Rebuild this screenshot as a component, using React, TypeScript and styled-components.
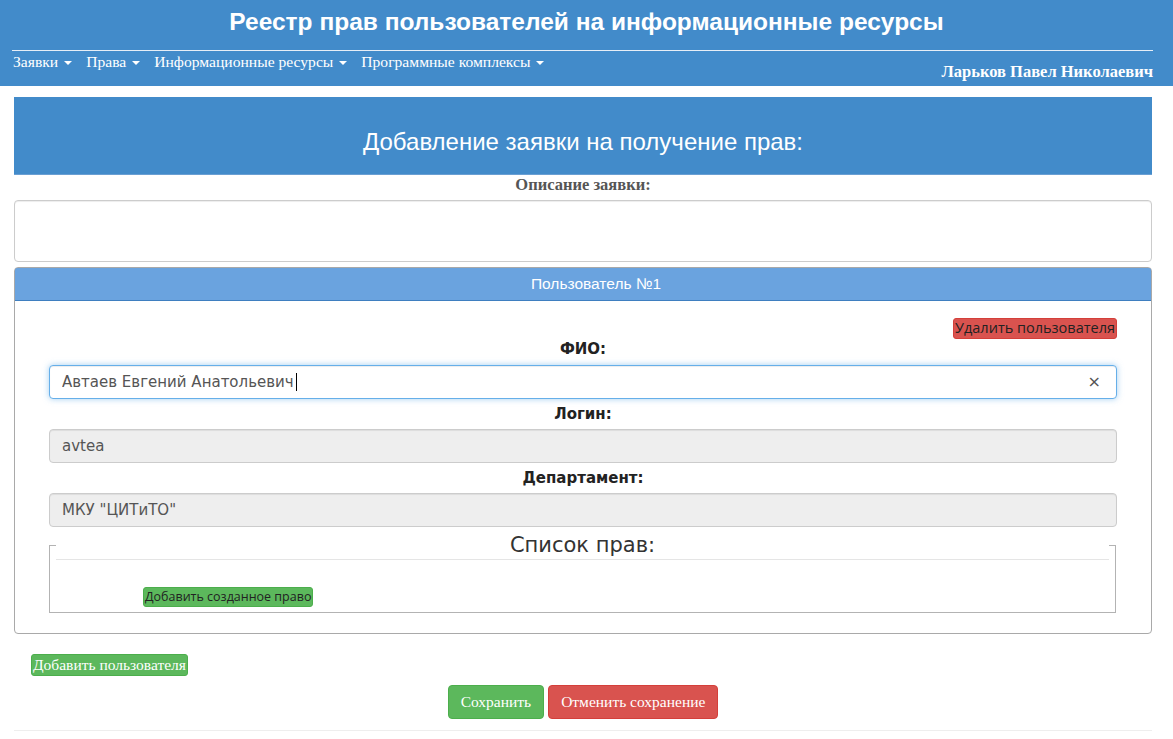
import React from "react";
import styled, { createGlobalStyle } from "styled-components";

const Global = createGlobalStyle`
  html, body { margin: 0; padding: 0; background: #fff; }
  body { font-family: "Liberation Serif", serif; color: #333; }
  * { box-sizing: border-box; }
`;

const Header = styled.header`
  background: #428bca;
  height: 86px;
  display: flex;
  flex-direction: column;
`;

const Title = styled.h1`
  margin: 8px 0 0;
  font-family: "Liberation Sans", Arial, sans-serif;
  font-weight: bold;
  font-size: 24.5px;
  line-height: 28px;
  color: #fff;
  text-align: center;
`;

const HeaderRule = styled.div`
  height: 1px;
  background: #e6eef7;
  margin: 14px 20px 0 12px;
`;

const NavRow = styled.nav`
  flex: 1;
  display: flex;
  justify-content: space-between;
  padding: 0 20px 0 13px;
`;

const NavList = styled.ul`
  list-style: none;
  margin: 0;
  padding: 0;
  display: flex;
  gap: 14px;
  align-self: flex-start;
`;

const NavItem = styled.li`
  font-family: "Liberation Serif", serif;
  font-size: 15.6px;
  line-height: 22px;
  color: #fff;
  display: flex;
  align-items: center;
`;

const Caret = styled.span`
  display: inline-block;
  width: 0;
  height: 0;
  margin-left: 6px;
  border-left: 4px solid transparent;
  border-right: 4px solid transparent;
  border-top: 4px solid #fff;
  margin-top: 2px;
`;

const UserName = styled.div`
  align-self: flex-end;
  margin-bottom: 4px;
  font-family: "Liberation Serif", serif;
  font-weight: bold;
  font-size: 16.5px;
  line-height: 20px;
  color: #fff;
`;

const Main = styled.main`
  padding: 11px 21px 0 14px;
  display: flex;
  flex-direction: column;
`;

const Banner = styled.div`
  height: 78px;
  background: #428bca;
  border-bottom: 1px solid #6a9fd3;
  padding-top: 31px;
  text-align: center;
  font-family: "Liberation Sans", Arial, sans-serif;
  font-size: 24px;
  line-height: 28px;
  color: #fff;
`;

const DescLabel = styled.div`
  height: 20px;
  line-height: 20px;
  text-align: center;
  font-family: "Liberation Serif", serif;
  font-weight: bold;
  font-size: 16.5px;
  color: #555;
  margin-bottom: 5px;
`;

const TextArea = styled.textarea`
  display: block;
  width: 100%;
  height: 62px;
  border: 1px solid #ccc;
  border-radius: 4px;
  resize: none;
  margin: 0;
  box-shadow: inset 0 1px 1px rgba(0, 0, 0, 0.075);
`;

const Panel = styled.section`
  margin-top: 5px;
  border: 1px solid #a9a9a9;
  border-radius: 4px;
  overflow: hidden;
`;

const PanelHeading = styled.div`
  height: 34px;
  background: #6aa3df;
  margin: -1px -1px 0;
  border: 1px solid #3f7fc0;
  border-radius: 4px 4px 0 0;
  padding-left: 26px;
  text-align: center;
  font-family: "Liberation Sans", Arial, sans-serif;
  font-size: 15.5px;
  line-height: 31px;
  color: #fff;
`;

const PanelBody = styled.div`
  padding: 17px 34px 20px 34px;
  display: flex;
  flex-direction: column;
`;

const ActionRow = styled.div`
  display: flex;
  justify-content: flex-end;
`;

const SmallButton = styled.button<{ $variant: "danger" | "success"; $size: number }>`
  font-family: "Open Sans", sans-serif;
  font-size: ${(p) => p.$size}px;
  color: #222;
  background: ${(p) => (p.$variant === "danger" ? "#d9534f" : "#5cb85c")};
  border: 1px solid ${(p) => (p.$variant === "danger" ? "#d43f3a" : "#4cae4c")};
  border-radius: 3px;
  padding: 0 1px;
  height: ${(p) => (p.$size > 13 ? 21 : 20)}px;
  line-height: 1;
  cursor: pointer;
  white-space: nowrap;
`;

const FieldLabel = styled.div<{ $first?: boolean }>`
  text-align: center;
  font-family: "DejaVu Sans", Verdana, sans-serif;
  font-weight: bold;
  font-size: 15px;
  color: #222;
  height: ${(p) => (p.$first ? 26 : 30)}px;
  line-height: ${(p) => (p.$first ? 20 : 30)}px;
`;

const InputWrap = styled.div`
  position: relative;
`;

const Input = styled.input<{ $focused?: boolean }>`
  display: block;
  width: 100%;
  height: 34px;
  margin: 0;
  padding: 0 12px;
  font-family: "DejaVu Sans", Verdana, sans-serif;
  font-size: 15px;
  color: #555;
  border: 1px solid ${(p) => (p.$focused ? "#66afe9" : "#ccc")};
  border-radius: 4px;
  background: ${(p) => (p.$focused ? "#fff" : "#eee")};
  outline: none;
  box-shadow: ${(p) =>
    p.$focused
      ? "inset 0 1px 1px rgba(0,0,0,.075), 0 0 6px rgba(102,175,233,.6)"
      : "inset 0 1px 1px rgba(0,0,0,.075)"};
`;

const ClearIcon = styled.span`
  position: absolute;
  right: 16px;
  top: 50%;
  transform: translateY(-50%);
  font-family: "DejaVu Sans", sans-serif;
  font-size: 16px;
  color: #555;
  line-height: 1;
`;

const TextCaret = styled.span`
  position: absolute;
  left: 247px;
  top: 8px;
  width: 1px;
  height: 18px;
  background: #000;
`;

const Fieldset = styled.fieldset`
  margin: 4px 1px 0 0;
  padding: 0 6px;
  border: 1px solid #b3b3b3;
  min-inline-size: 0;
`;

const Legend = styled.legend`
  width: 100%;
  padding: 0;
  text-align: center;
  font-family: "DejaVu Sans", Verdana, sans-serif;
  font-size: 21px;
  line-height: 28px;
  color: #333;
  border-bottom: 1px solid #e5e5e5;
`;

const RightsArea = styled.div`
  padding: 27px 0 5px 87px;
  display: flex;
`;

const FormButton = styled.button<{ $variant: "danger" | "success"; $tall?: boolean }>`
  font-family: "Liberation Serif", serif;
  font-size: 15.5px;
  color: #fff;
  background: ${(p) => (p.$variant === "danger" ? "#d9534f" : "#5cb85c")};
  border: 1px solid ${(p) => (p.$variant === "danger" ? "#d43f3a" : "#4cae4c")};
  border-radius: ${(p) => (p.$tall ? 4 : 3)}px;
  height: ${(p) => (p.$tall ? 34 : 22)}px;
  padding: ${(p) => (p.$tall ? "0 12px" : "0 1px")};
  cursor: pointer;
  white-space: nowrap;
`;

const AddUserRow = styled.div`
  margin: 20px 0 0 17px;
  display: flex;
`;

const SaveRow = styled.div`
  margin-top: 9px;
  display: flex;
  justify-content: center;
  gap: 4px;
`;

const BottomRule = styled.hr`
  margin: 11px 0 0;
  border: 0;
  border-top: 1px solid #eee;
`;

export default function App() {
  const menu = ["Заявки", "Права", "Информационные ресурсы", "Программные комплексы"];
  return (
    <>
      <Global />
      <Header>
        <Title>Реестр прав пользователей на информационные ресурсы</Title>
        <HeaderRule />
        <NavRow>
          <NavList>
            {menu.map((m) => (
              <NavItem key={m}>
                {m}
                <Caret />
              </NavItem>
            ))}
          </NavList>
          <UserName>Ларьков Павел Николаевич</UserName>
        </NavRow>
      </Header>
      <Main>
        <Banner>Добавление заявки на получение прав:</Banner>
        <DescLabel>Описание заявки:</DescLabel>
        <TextArea />
        <Panel>
          <PanelHeading>Пользователь №1</PanelHeading>
          <PanelBody>
            <ActionRow>
              <SmallButton $variant="danger" $size={14.5}>Удалить пользователя</SmallButton>
            </ActionRow>
            <FieldLabel $first>ФИО:</FieldLabel>
            <InputWrap>
              <Input $focused defaultValue="Автаев Евгений Анатольевич" />
              <TextCaret />
              <ClearIcon>×</ClearIcon>
            </InputWrap>
            <FieldLabel>Логин:</FieldLabel>
            <Input disabled defaultValue="avtea" />
            <FieldLabel>Департамент:</FieldLabel>
            <Input disabled defaultValue='МКУ "ЦИТиТО"' />
            <Fieldset>
              <Legend>Список прав:</Legend>
              <RightsArea>
                <SmallButton $variant="success" $size={12.5}>Добавить созданное право</SmallButton>
              </RightsArea>
            </Fieldset>
          </PanelBody>
        </Panel>
        <AddUserRow>
          <FormButton $variant="success">Добавить пользователя</FormButton>
        </AddUserRow>
        <SaveRow>
          <FormButton $variant="success" $tall>Сохранить</FormButton>
          <FormButton $variant="danger" $tall>Отменить сохранение</FormButton>
        </SaveRow>
        <BottomRule />
      </Main>
    </>
  );
}
